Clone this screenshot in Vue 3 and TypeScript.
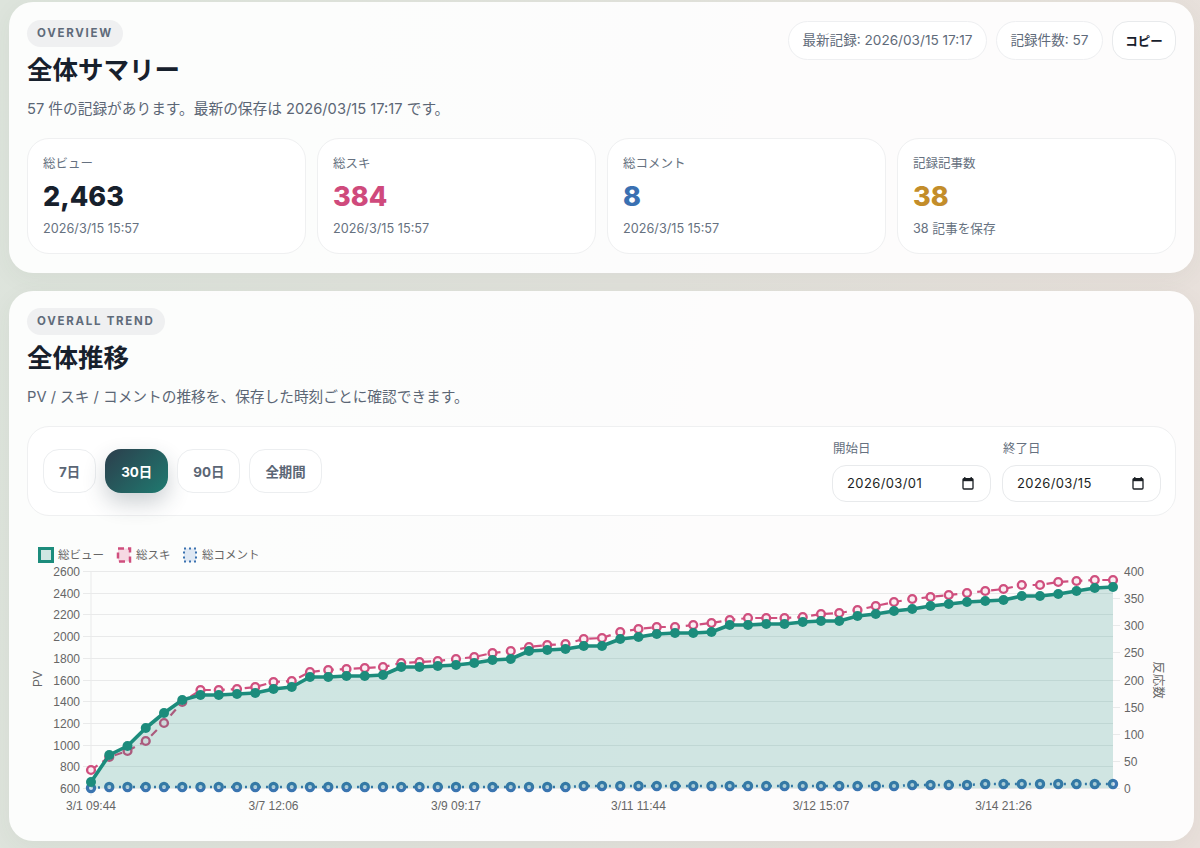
<template>
  <div class="page">
    <!-- 全体サマリー -->
    <section class="card">
      <div class="head">
        <div>
          <span class="pill">OVERVIEW</span>
          <h2 class="title">全体サマリー</h2>
        </div>
        <div class="chips">
          <span class="chip">最新記録: 2026/03/15 17:17</span>
          <span class="chip">記録件数: 57</span>
          <button class="copy">コピー</button>
        </div>
      </div>
      <p class="desc">57 件の記録があります。最新の保存は 2026/03/15 17:17 です。</p>
      <div class="stats">
        <div class="stat" v-for="s in stats" :key="s.label">
          <div class="stat-label">{{ s.label }}</div>
          <div class="stat-value" :class="s.tone">{{ s.value }}</div>
          <div class="stat-meta">{{ s.meta }}</div>
        </div>
      </div>
    </section>

    <!-- 全体推移 -->
    <section class="card trend">
      <span class="pill">OVERALL TREND</span>
      <h2 class="title">全体推移</h2>
      <p class="desc">PV / スキ / コメントの推移を、保存した時刻ごとに確認できます。</p>

      <div class="panel">
        <div class="ranges">
          <button v-for="r in ranges" :key="r" class="range" :class="{ active: r === '30日' }">{{ r }}</button>
        </div>
        <div class="dates">
          <div class="date-field" v-for="d in dates" :key="d.label">
            <span class="date-label">{{ d.label }}</span>
            <div class="date-input">
              <span>{{ d.value }}</span>
              <svg width="12" height="13" viewBox="0 0 12 13">
                <path d="M2.8 0v2M9.2 0v2" stroke="#1b1f24" stroke-width="1.3" fill="none" />
                <rect x="1" y="1.6" width="10" height="10.4" rx="1" fill="none" stroke="#1b1f24" stroke-width="1.3" />
                <rect x="1" y="1.6" width="10" height="2.6" fill="#1b1f24" />
              </svg>
            </div>
          </div>
        </div>
      </div>

      <!-- チャート: 座標はページ上のピクセルに合わせる -->
      <svg class="chart" viewBox="27 530 1149 292" width="1149" height="292">
        <!-- 凡例 -->
        <rect x="39.5" y="548.5" width="13" height="13" fill="#cfe6e2" stroke="#1c8c7c" stroke-width="3" />
        <text class="legend" x="58" y="558.5">総ビュー</text>
        <rect x="118" y="548.5" width="12" height="13" fill="#f6d9e3" stroke="#cf4f7e" stroke-width="2.5" stroke-dasharray="6 4" />
        <text class="legend" x="136" y="558.5">総スキ</text>
        <rect x="184" y="548.5" width="12" height="13" fill="#dfe8f3" stroke="#3a72b0" stroke-width="2" stroke-dasharray="2 3" />
        <text class="legend" x="202" y="558.5">総コメント</text>

        <!-- 目盛り -->
        <g v-for="t in leftTicks" :key="t.label">
          <line x1="83" :y1="t.y" x2="1113" :y2="t.y" class="grid" />
          <text class="tick" x="80" :y="t.y + 4" text-anchor="end">{{ t.label }}</text>
        </g>
        <g v-for="t in rightTicks" :key="t.label">
          <line x1="1113" :y1="t.y" x2="1120" :y2="t.y" class="grid" />
          <text class="tick" x="1124" :y="t.y + 4">{{ t.label }}</text>
        </g>
        <line x1="91" y1="571" x2="91" y2="796" class="grid" />
        <text class="tick" transform="translate(42 679) rotate(-90)" text-anchor="middle">PV</text>
        <text class="axis-jp" transform="translate(1154 680) rotate(90)" text-anchor="middle">反応数</text>
        <text v-for="t in xTicks" :key="t.label" class="tick" :x="t.x" y="810" text-anchor="middle">{{ t.label }}</text>

        <!-- 総コメント -->
        <path :d="linePath(commentY)" fill="none" stroke="#3a75b0" stroke-width="2.5" stroke-dasharray="2 5" />
        <circle v-for="(y, i) in commentY" :key="'c' + i" :cx="xAt(i)" :cy="y" r="3.6" fill="#cfdeee" stroke="#3a75b0" stroke-width="3.2" />

        <!-- 総スキ -->
        <path :d="linePath(sukiY)" fill="none" stroke="#cf4f7e" stroke-width="2.2" stroke-dasharray="8 6" />
        <circle v-for="(y, i) in sukiY" :key="'s' + i" :cx="xAt(i)" :cy="y" r="3.9" fill="#fbeef3" stroke="#cf4f7e" stroke-width="2.4" />

        <!-- 総ビュー -->
        <path :d="areaPath" fill="#1c8c7c" fill-opacity="0.2" />
        <path :d="linePath(viewY)" fill="none" stroke="#1c8c7c" stroke-width="3.6" stroke-linejoin="round" />
        <circle v-for="(y, i) in viewY" :key="'v' + i" :cx="xAt(i)" :cy="y" r="5" fill="#1c8c7c" />
      </svg>
    </section>
  </div>
</template>

<script setup lang="ts">
const stats = [
  { label: '総ビュー', value: '2,463', meta: '2026/3/15 15:57', tone: 'ink' },
  { label: '総スキ', value: '384', meta: '2026/3/15 15:57', tone: 'pink' },
  { label: '総コメント', value: '8', meta: '2026/3/15 15:57', tone: 'blue' },
  { label: '記録記事数', value: '38', meta: '38 記事を保存', tone: 'gold' }
]

const ranges = ['7日', '30日', '90日', '全期間']
const dates = [
  { label: '開始日', value: '2026/03/01' },
  { label: '終了日', value: '2026/03/15' }
]

const left = 91
const right = 1113
const top = 571
const bottom = 788

const xAt = (i: number) => left + (i * (right - left)) / 56

const leftTicks = Array.from({ length: 11 }, (_, i) => ({
  label: String(2600 - i * 200),
  y: Math.round(top + (i * (bottom - top)) / 10) + 0.5
}))
const rightTicks = Array.from({ length: 9 }, (_, i) => ({
  label: String(400 - i * 50),
  y: Math.round(top + (i * (bottom - top)) / 8) + 0.5
}))
const xTicks = ['3/1 09:44', '3/7 12:06', '3/9 09:17', '3/11 11:44', '3/12 15:07', '3/14 21:26'].map((label, i) => ({
  label,
  x: xAt(i * 10)
}))

// スクリーンショットから読み取った各点の y 座標
const viewY = [
  782, 755, 746, 728, 713, 700, 695, 695, 694, 693, 689, 687, 677, 677, 676, 676, 675, 667, 667,
  666, 665, 663, 660, 659, 651, 650, 649, 646, 646, 639, 637, 634, 633, 633, 632, 625, 625, 624,
  624, 622, 621, 621, 616, 614, 611, 609, 606, 604, 602, 601, 600, 596, 596, 594, 591, 588, 587
]
const sukiY = [
  770, 757, 751, 741, 723, 702, 690, 690, 689, 687, 682, 681, 672, 670, 669, 668, 667, 663, 662,
  661, 659, 657, 653, 651, 647, 645, 644, 639, 638, 632, 629, 627, 627, 625, 623, 620, 618, 618,
  618, 617, 614, 613, 610, 606, 602, 599, 597, 595, 593, 591, 589, 585, 585, 582, 581, 580, 580
]
const commentY = Array.from({ length: 57 }, (_, i) => {
  if (i === 0) return 788
  if (i < 27) return 787
  if (i < 45) return 786
  return i < 49 ? 785 : 784
})

const linePath = (ys: number[]) => ys.map((y, i) => `${i ? 'L' : 'M'}${xAt(i).toFixed(1)},${y}`).join(' ')
const areaPath = `${linePath(viewY)} L${right},${bottom} L${left},${bottom} Z`
</script>

<style>
html, body { background: #e3e2dc; }
</style>

<style scoped>
.page {
  box-sizing: border-box;
  height: 848px;
  overflow: hidden;
  padding: 2px 6px 0 9px;
  display: flex;
  flex-direction: column;
  gap: 18px;
  background: linear-gradient(100deg, #dde4dc 0%, #e2e2dc 50%, #e9e0db 100%);
  font-family: Inter, "Noto Sans CJK JP", sans-serif;
  color: #17202c;
}
.card {
  background: rgba(255, 255, 255, 0.9);
  border-radius: 24px;
  padding: 18px 18px 19px;
  box-shadow: 0 6px 24px rgba(60, 70, 60, 0.05);
}
.trend { padding-top: 17px; }
.head { display: flex; justify-content: space-between; align-items: flex-start; }
.pill {
  display: inline-block;
  height: 27px;
  line-height: 27px;
  padding: 0 10px;
  border-radius: 14px;
  background: #eff0f1;
  color: #5f6b7a;
  font-size: 11.5px;
  font-weight: 700;
  letter-spacing: 0.15em;
  vertical-align: top;
}
.title {
  margin: 8px 0 0;
  font-size: 25.5px;
  line-height: 30px;
  font-weight: 700;
}
.desc {
  margin: 13px 0 0;
  font-size: 14.7px;
  line-height: 22px;
  color: #5b6675;
}
.chips { display: flex; gap: 9px; margin-top: 1px; }
.chip {
  box-sizing: border-box;
  height: 39px;
  line-height: 37px;
  padding: 0 13.5px;
  border: 1px solid #eeeff1;
  border-radius: 20px;
  background: #fff;
  font-size: 13.6px;
  color: #5f6b7a;
}
.copy {
  box-sizing: border-box;
  height: 39px;
  width: 64px;
  padding: 0;
  border: 1px solid #e8eaec;
  border-radius: 16px;
  background: #fff;
  font: 700 12.5px Inter, "Noto Sans CJK JP", sans-serif;
  color: #17202c;
}
.stats {
  margin-top: 18px;
  display: grid;
  grid-template-columns: repeat(4, 1fr);
  gap: 11px;
}
.stat {
  box-sizing: border-box;
  height: 116px;
  padding: 16px 15px 0;
  border: 1px solid #eff0f1;
  border-radius: 22px;
  background: #fff;
}
.stat-label { font-size: 12.5px; line-height: 18px; color: #667180; }
.stat-value { margin-top: 7px; font-size: 27px; line-height: 34px; font-weight: 800; }
.stat-meta { margin-top: 5px; font-size: 12.7px; line-height: 20px; color: #667180; }
.ink { color: #17202c; }
.pink { color: #cf4a7c; }
.blue { color: #3a70b2; }
.gold { color: #c38d2a; }
.panel {
  box-sizing: border-box;
  margin-top: 18px;
  height: 90px;
  padding: 0 14px 0 15px;
  display: flex;
  justify-content: space-between;
  align-items: center;
  border: 1px solid #eff0f1;
  border-radius: 22px;
  background: #fff;
}
.ranges { display: flex; gap: 9px; }
.range {
  box-sizing: border-box;
  height: 44px;
  padding: 0 15px;
  border: 1px solid #eceef0;
  border-radius: 16px;
  background: #fff;
  font: 700 13.4px Inter, "Noto Sans CJK JP", sans-serif;
  color: #5b6675;
}
.range.active {
  padding: 0 16px;
  border: none;
  background: linear-gradient(135deg, #2c3e4c, #1f7a70);
  color: #fff;
  box-shadow: 0 10px 22px rgba(40, 60, 70, 0.24);
}
.dates { display: flex; gap: 11px; }
.date-field { display: flex; flex-direction: column; gap: 8px; width: 159px; }
.date-label { padding-left: 1px; font-size: 12.5px; line-height: 16px; color: #667180; }
.date-input {
  box-sizing: border-box;
  height: 37px;
  padding: 0 16px 0 14px;
  display: flex;
  justify-content: space-between;
  align-items: center;
  border: 1px solid #e8eaec;
  border-radius: 14px;
  background: #fff;
  font-size: 13px;
  letter-spacing: 0.03em;
  color: #1b1f24;
}
.chart { display: block; margin-top: 14px; }
.grid { stroke: #e9eaea; stroke-width: 1; }
.tick { font: 12px "Liberation Sans", Arial, sans-serif; fill: #666; }
.legend { font: 11.5px "Noto Sans CJK JP", sans-serif; fill: #666; }
.axis-jp { font: 12.5px "Noto Sans CJK JP", sans-serif; fill: #666; }
</style>
